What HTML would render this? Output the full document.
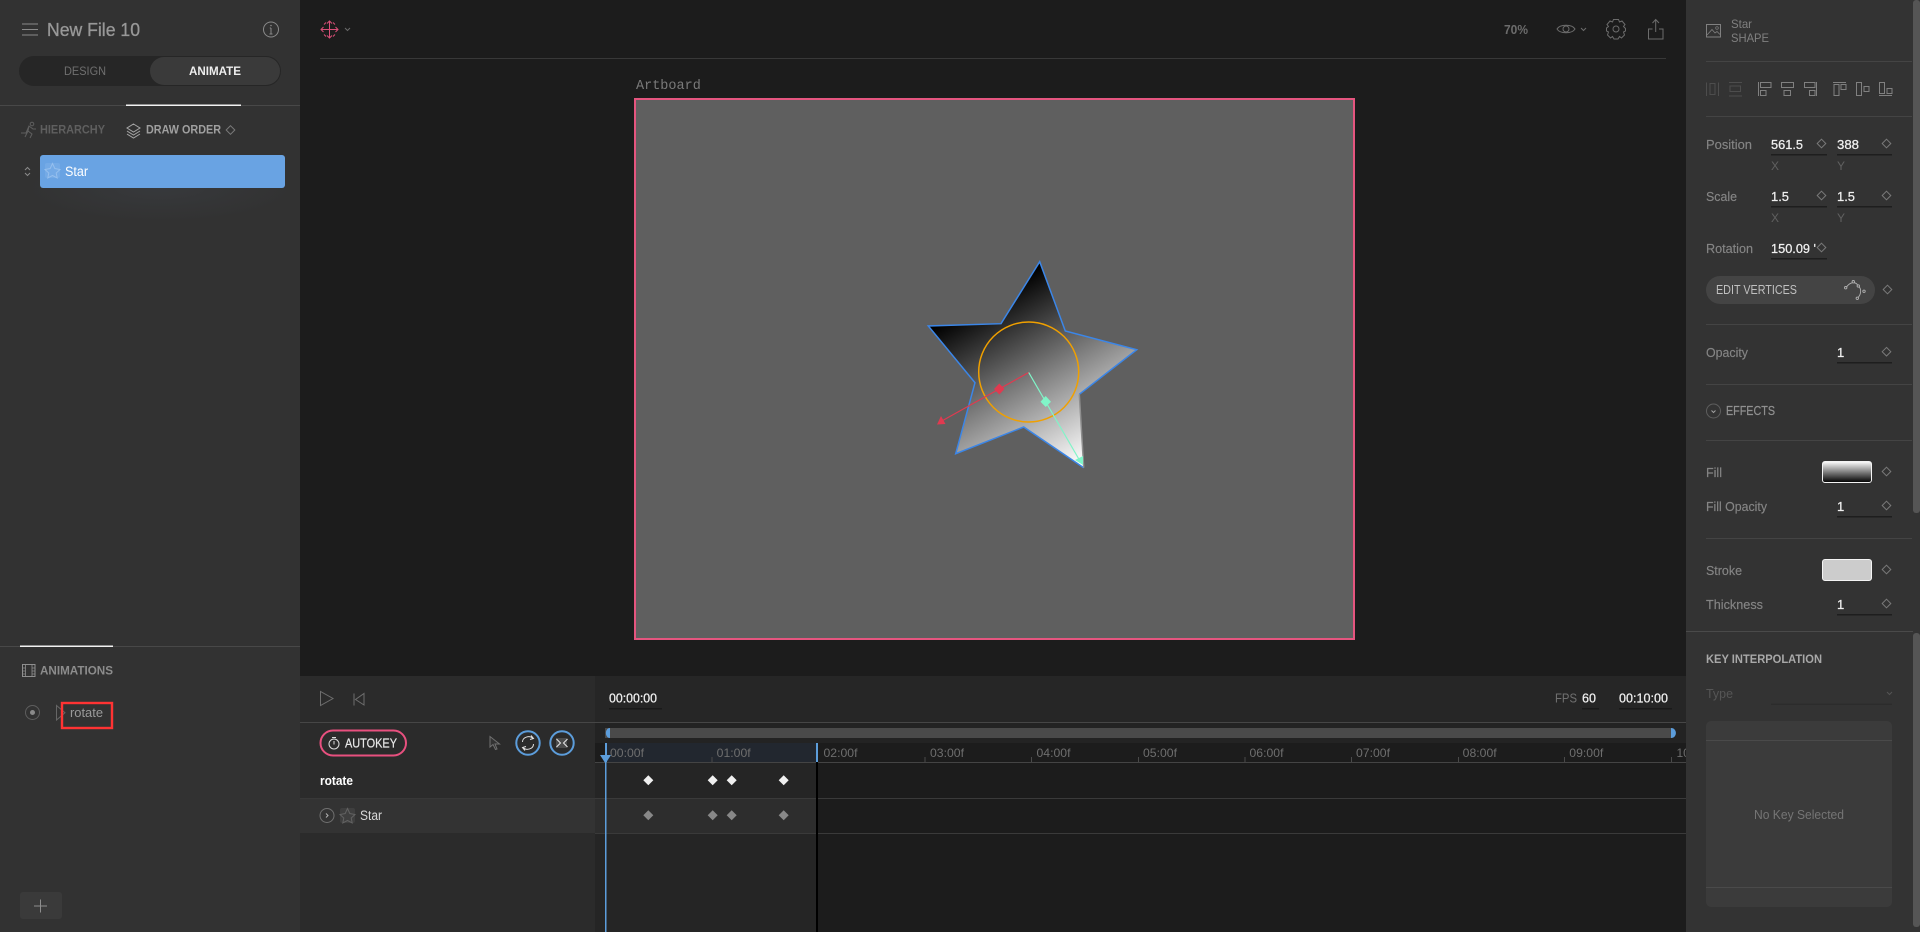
<!DOCTYPE html>
<html><head><meta charset="utf-8"><title>New File 10</title>
<style>
html,body{margin:0;padding:0;background:#1c1c1c;overflow:hidden;width:1920px;height:932px}
svg{display:block;position:absolute;left:0;top:0}
text{font-family:"Liberation Sans",sans-serif;font-size:13px;fill:#8e8e8e}
.b{font-weight:bold}
.w{fill:#f0f0f0}
.m{font-family:"Liberation Mono",monospace}
.s{fill:#5f5f5f}
.l{fill:#8a8a8a}
.r{fill:#6e6e6e;font-size:12px}
.v{font-size:13px;fill:#f0f0f0;stroke:#f0f0f0;stroke-width:.25px}
.p{font-size:13px;fill:#858585;stroke:#858585;stroke-width:.15px}
</style></head><body>
<svg width="1920" height="932" viewBox="0 0 1920 932" xmlns="http://www.w3.org/2000/svg">
<defs>
<g id="d"><path d="M0-4.300L4.300 0 0 4.300-4.300 0Z" fill="none" stroke="#7a7a7a" stroke-width="1"/></g>
<g id="k"><path d="M0-5L5 0 0 5-5 0Z"/></g>
<linearGradient id="sg" gradientUnits="userSpaceOnUse" x1="986" y1="298" x2="1082" y2="464">
<stop offset="0" stop-color="#000"/><stop offset="1" stop-color="#fff"/></linearGradient>
<linearGradient id="fg" x1="0" y1="0" x2="0" y2="1"><stop offset="0" stop-color="#fff"/><stop offset="1" stop-color="#000"/></linearGradient>
<radialGradient id="gl" cx=".5" cy=".5" r=".5"><stop offset="0" stop-color="#37393c"/><stop offset="1" stop-color="#323232"/></radialGradient>
</defs>

<!-- backgrounds -->
<rect width="1920" height="932" fill="#1c1c1c"/>
<rect x="0" y="0" width="300" height="932" fill="#323232"/>
<rect x="300" y="676" width="295" height="256" fill="#2b2b2b"/>
<rect x="595" y="676" width="1091" height="256" fill="#1c1c1c"/>
<rect x="595" y="676" width="1091" height="46" fill="#262626"/>
<rect x="595" y="722" width="1091" height="21" fill="#232323"/>
<rect x="595" y="762" width="222" height="170" fill="#252525"/>
<rect x="300" y="798" width="295" height="35" fill="#333"/>
<rect x="595" y="798" width="222" height="35" fill="#2d2d2d"/>
<rect x="1686" y="0" width="234" height="932" fill="#333"/>

<!-- left panel header -->
<g stroke="#8a8a8a" stroke-width="1"><path d="M22 24H38M22 29.500H38M22 35H38"/></g>
<text x="47" y="36" style="font-size:18px;fill:#989898;stroke:#989898;stroke-width:.3px" textLength="93" lengthAdjust="spacingAndGlyphs">New File 10</text>
<circle cx="271" cy="29.500" r="7.500" fill="none" stroke="#8a8a8a"/>
<path d="M271 28V34M269.500 34H272.500M269.800 28H271" stroke="#8a8a8a" fill="none"/><circle cx="271" cy="25.500" r=".8" fill="#8a8a8a"/>
<rect x="19" y="56" width="262" height="30" rx="15" fill="#262626"/>
<rect x="150" y="57" width="130" height="28" rx="14" fill="#3a3a3a"/>
<text x="64" y="75" style="font-size:12px;fill:#6f6f6f" textLength="42" lengthAdjust="spacingAndGlyphs">DESIGN</text>
<text x="189" y="75" class="b" style="font-size:12px;fill:#eee" textLength="52" lengthAdjust="spacingAndGlyphs">ANIMATE</text>
<rect x="0" y="105" width="300" height="1" fill="#484848"/>
<rect x="126" y="104.500" width="115" height="1.500" fill="#f2f2f2"/>

<!-- hierarchy tabs -->
<g fill="none" stroke="#5f5f5f" stroke-width="1"><circle cx="32" cy="124" r="1.800"/><path d="M21 133L26 133 29 126 33 129 36 129M29 126L28 131 32 134 30 138M28 131L25 137"/></g>
<text x="40" y="133.500" class="b s" style="font-size:12px" textLength="65" lengthAdjust="spacingAndGlyphs">HIERARCHY</text>
<g fill="none" stroke="#a5a5a5" stroke-width="1"><path d="M133.500 124L140 128 133.500 132 127 128ZM127 131L133.500 135 140 131M127 134L133.500 138 140 134"/></g>
<text x="146" y="133.500" class="b" style="font-size:12px;fill:#a0a0a0" textLength="75" lengthAdjust="spacingAndGlyphs">DRAW ORDER</text>
<use href="#d" x="230.500" y="130"/>
<ellipse cx="160" cy="188" rx="135" ry="34" fill="url(#gl)"/>
<path d="M25 170L27.500 167.500 30 170M25 173L27.500 175.500 30 173" fill="none" stroke="#8a8a8a"/>
<rect x="40" y="155" width="245" height="33" rx="3" fill="#69a3e3"/>
<rect x="45" y="163" width="15" height="15" rx="2" fill="#74aae6"/>
<path d="M52.500 163.500L54.800 168.500 60 169.500 56.200 173 57.200 178 52.500 175.500 47.800 178 48.800 173 45 169.500 50.200 168.500Z" fill="none" stroke="#95bfee"/>
<text x="65" y="176" class="w" style="font-size:13.500px;fill:#fff" textLength="23" lengthAdjust="spacingAndGlyphs">Star</text>

<!-- animations -->
<rect x="0" y="646" width="300" height="1" fill="#484848"/>
<rect x="20" y="645.500" width="93" height="1.500" fill="#f2f2f2"/>
<rect x="22.500" y="664.500" width="12.500" height="12" fill="none" stroke="#8f8f8f"/>
<path d="M25.500 665V676M32 665V676M22.500 668H25.500M22.500 671H25.500M22.500 674H25.500M32 668H35M32 671H35M32 674H35" stroke="#8f8f8f" stroke-width=".8"/>
<text x="40" y="674.500" class="b" style="font-size:12px;fill:#8c8c8c" textLength="73" lengthAdjust="spacingAndGlyphs">ANIMATIONS</text>
<circle cx="32.500" cy="712.500" r="7" fill="none" stroke="#5e5e5e"/><circle cx="32.500" cy="712.500" r="2.500" fill="#8a8a8a"/>
<path d="M56.500 705.500V720L65 712.800Z" fill="none" stroke="#666"/>
<rect x="62" y="703" width="50" height="25" fill="none" stroke="#ff3333" stroke-width="2.400"/>
<text x="70" y="717" style="font-size:13px;fill:#9a9a9a" textLength="33" lengthAdjust="spacingAndGlyphs">rotate</text>
<rect x="20" y="892" width="42" height="27" rx="3" fill="#3a3a3a"/>
<path d="M40.500 899.500V912.500M34 906H47" stroke="#8e8e8e" fill="none"/>

<!-- top bar -->
<g fill="none" stroke="#d94f78" stroke-width="1"><path d="M329.500 21V38M321 29.500H338M327 23.500L329.500 21 332 23.500M327 35.500L329.500 38 332 35.500M323.500 27L321 29.500 323.500 32M335.500 27L338 29.500 335.500 32"/><path d="M324 24.500L326 22.500M335 24.500L333 22.500M324 34.500L326 36.500M335 34.500L333 36.500" stroke-width="1"/></g>
<path d="M345 28L347.500 30.500 350 28" fill="none" stroke="#6a6a6a"/>
<rect x="320" y="58" width="1346" height="1" fill="#383838"/>
<text x="1504" y="34" class="b" style="font-size:13px;fill:#6c6c6c" textLength="24" lengthAdjust="spacingAndGlyphs">70%</text>
<g fill="none" stroke="#6c6c6c" stroke-width="1">
<path d="M1557 29C1560 24 1572 24 1575 29 1572 34 1560 34 1557 29Z"/><circle cx="1566" cy="29" r="3"/>
<path d="M1581 28L1583.500 30.500 1586 28"/>
<circle cx="1616" cy="29" r="3"/>
<path d="M1613.500 19.500L1618.500 19.500 1619.500 22 1622 21 1625 24.500 1623.500 26.500 1625.500 28.500 1625.500 31 1623.500 32 1624.500 35 1621.500 38 1619.500 36.500 1618 39 1614 39 1612.500 36.500 1610.500 38 1607.500 35 1608.500 32 1606.500 31 1606.500 28 1608.500 26.500 1607 24.500 1610 21 1612.500 22Z"/>
<path d="M1652.500 29H1648.500V39H1663V29H1659M1655.700 32V19.500M1652.500 23L1655.700 19.500 1659 23"/>
</g>

<!-- artboard -->
<text x="636" y="89" class="m" style="font-size:13.500px;fill:#7a7a7a">Artboard</text>
<rect x="635" y="99" width="719" height="540" fill="#5f5f5f" stroke="#e5557f" stroke-width="2"/>
<path d="M1039.700 261.700L1065.300 331 1136.700 349.700 1079.300 394.300 1083.700 467.700 1023.700 427 955.700 453.700 975 382.700 928.300 326 1001 323.700Z" fill="url(#sg)"/>
<path d="M1079.300 394.300L1136.700 349.700 1065.300 331 1039.700 261.700 1001 323.700 928.300 326 975 382.700 955.700 453.700 1023.700 427 1083.700 467.700" fill="none" stroke="#3b86e8" stroke-width="1.500"/>
<path d="M1079.300 394.300L1083.700 467.700" stroke="#8f8f8f" stroke-width="1.500" fill="none"/>
<circle cx="1028.700" cy="372" r="50" fill="none" stroke="#f0a000" stroke-width="1.500"/>
<path d="M1028.700 372.500L940 422" stroke="#e03a50" stroke-width="1.200" fill="none"/>
<path d="M937 424.500L941 416 945.500 424Z" fill="#e03a50"/>
<path d="M999.300 383.500L1004.500 389 999.300 394.500 994 389Z" fill="#e03a50"/>
<path d="M1028.700 372.500L1080 461" stroke="#80f5c8" stroke-width="1.200" fill="none"/>
<path d="M1045.700 396L1051 401.700 1045.700 407 1040.500 401.700Z" fill="#80f5c8"/>
<path d="M1083 465L1075 460 1083 456Z" fill="#80f5c8"/>

<!-- timeline left -->
<rect x="300" y="722" width="1386" height="1" fill="#464646"/>
<path d="M320.500 691.500V705.500L333 698.500Z" fill="none" stroke="#6e6e6e"/>
<path d="M354 693.500V705.500M364 693.500V705L355.500 699.500Z" fill="none" stroke="#6e6e6e"/>
<rect x="320.500" y="730.500" width="85.500" height="25" rx="12.500" fill="none" stroke="#e8507f" stroke-width="2"/>
<circle cx="334" cy="744" r="5" fill="none" stroke="#dcdcdc"/><path d="M334 741V744.500M332 737.500H336" stroke="#dcdcdc" fill="none"/>
<text x="345" y="747.500" style="font-size:12.500px;fill:#e8e8e8;stroke:#e8e8e8;stroke-width:.2px" textLength="52" lengthAdjust="spacingAndGlyphs">AUTOKEY</text>
<path d="M490 736.500V747L493 744.500 495.500 749.500 497 749 495 744 499.500 744Z" fill="#333" stroke="#707070"/>
<circle cx="528" cy="743" r="11.700" fill="none" stroke="#5c9ddb" stroke-width="2"/>
<circle cx="562" cy="743" r="11.700" fill="none" stroke="#5c9ddb" stroke-width="2"/>
<g fill="none" stroke="#e0e0e0" stroke-width="1"><path d="M522.500 742C522.500 737 529.500 735 533 738.500M531 735.500L533.500 738.500 530 739.500M533.500 744C533.500 749 526.500 751 523 747.500M525 750.500L522.500 747.500 526 746.500"/></g>
<rect x="556" y="738" width="11" height="10" fill="#4c4c4c"/>
<path d="M556.500 739L560.500 743 556.500 747M567.500 739L563.500 743 567.500 747" fill="none" stroke="#e8e8e8"/>
<text x="320" y="785" class="b w" style="font-size:13px;fill:#fff" textLength="33" lengthAdjust="spacingAndGlyphs">rotate</text>
<rect x="300" y="798" width="295" height=".8" fill="#393939"/>
<circle cx="327" cy="815.500" r="7" fill="none" stroke="#707070"/><path d="M326 813.500L328 815.500 326 817.500" fill="none" stroke="#b0b0b0"/>
<rect x="340" y="808" width="15" height="15" rx="2" fill="#3f3f3f"/>
<path d="M347.500 808.500L349.800 813.500 355 814.500 351.200 818 352.200 823 347.500 820.500 342.800 823 343.800 818 340 814.500 345.200 813.500Z" fill="none" stroke="#626262"/>
<text x="360" y="820" style="font-size:13.500px;fill:#d8d8d8" textLength="22" lengthAdjust="spacingAndGlyphs">Star</text>

<!-- timeline right -->
<text x="609" y="702.500" class="v" textLength="48" lengthAdjust="spacingAndGlyphs">00:00:00</text>
<rect x="609" y="708" width="53" height="1.500" fill="#1a1a1a"/>
<text x="1555" y="702.500" style="font-size:13px;fill:#707070" textLength="22" lengthAdjust="spacingAndGlyphs">FPS</text>
<text x="1582" y="702.500" class="v" textLength="14" lengthAdjust="spacingAndGlyphs">60</text>
<rect x="1582" y="708" width="17" height="1.500" fill="#1a1a1a"/>
<text x="1619" y="702.500" class="v" textLength="49" lengthAdjust="spacingAndGlyphs">00:10:00</text>
<rect x="1619" y="708" width="53" height="1.500" fill="#1a1a1a"/>
<rect x="605" y="728" width="1067" height="10" fill="#4a4a4a"/>
<path d="M610 728V738C604.500 738 604.500 728 610 728Z" fill="#5c9ddb"/>
<path d="M1671 728V738C1677.500 738 1677.500 728 1671 728Z" fill="#5c9ddb"/>
<rect x="595" y="743" width="1091" height="19" fill="#1c1c1c"/>
<rect x="605" y="743" width="212" height="19" fill="#22272f"/>
<rect x="595" y="762" width="1091" height="1" fill="#444"/>
<rect x="605" y="798" width="1081" height="1" fill="#3a3a3a"/><rect x="595" y="798" width="10" height="1" fill="#3a3a3a"/>
<rect x="595" y="833" width="1091" height="1" fill="#3a3a3a"/>
<rect x="816" y="762" width="2" height="170" fill="#000"/>
<g fill="#4a4a4a"><rect x="711.500" y="757" width="1" height="5"/><rect x="924.500" y="757" width="1" height="5"/><rect x="1031" y="757" width="1" height="5"/><rect x="1138" y="757" width="1" height="5"/><rect x="1244.500" y="757" width="1" height="5"/><rect x="1351" y="757" width="1" height="5"/><rect x="1458" y="757" width="1" height="5"/><rect x="1564" y="757" width="1" height="5"/><rect x="1671" y="757" width="1" height="5"/></g>
<g>
<text x="610" y="757" class="r" textLength="34" lengthAdjust="spacingAndGlyphs">00:00f</text>
<text x="716.700" y="757" class="r" textLength="34" lengthAdjust="spacingAndGlyphs">01:00f</text>
<text x="823.500" y="757" class="r" textLength="34" lengthAdjust="spacingAndGlyphs">02:00f</text>
<text x="930" y="757" class="r" textLength="34" lengthAdjust="spacingAndGlyphs">03:00f</text>
<text x="1036.500" y="757" class="r" textLength="34" lengthAdjust="spacingAndGlyphs">04:00f</text>
<text x="1143" y="757" class="r" textLength="34" lengthAdjust="spacingAndGlyphs">05:00f</text>
<text x="1249.500" y="757" class="r" textLength="34" lengthAdjust="spacingAndGlyphs">06:00f</text>
<text x="1356" y="757" class="r" textLength="34" lengthAdjust="spacingAndGlyphs">07:00f</text>
<text x="1462.700" y="757" class="r" textLength="34" lengthAdjust="spacingAndGlyphs">08:00f</text>
<text x="1569.300" y="757" class="r" textLength="34" lengthAdjust="spacingAndGlyphs">09:00f</text>
<text x="1676.500" y="757" class="r">10</text>
</g>
<rect x="1686" y="740" width="234" height="30" fill="#333"/>
<rect x="605" y="743" width="2" height="19" fill="#5c9ddb"/>
<rect x="816" y="743" width="2" height="19" fill="#5c9ddb"/>
<rect x="605" y="762" width="1.500" height="170" fill="#5c9ddb"/>
<path d="M600 755H611L605.500 763.500Z" fill="#5c9ddb"/>
<g fill="#f0f0f0"><use href="#k" x="648.300" y="780.300"/><use href="#k" x="712.700" y="780.300"/><use href="#k" x="731.700" y="780.300"/><use href="#k" x="783.700" y="780.300"/></g>
<g fill="#888"><use href="#k" x="648.300" y="815.300"/><use href="#k" x="712.700" y="815.300"/><use href="#k" x="731.700" y="815.300"/><use href="#k" x="783.700" y="815.300"/></g>

<!-- right panel -->
<rect x="1913" y="0" width="7" height="513" rx="3" fill="#555"/>
<rect x="1913" y="633" width="7" height="294" rx="3" fill="#555"/>
<rect x="1706.500" y="24.500" width="14" height="12.500" fill="none" stroke="#808080"/>
<path d="M1707 35L1712 29.500 1715 33 1717 31.500 1720 34.500" fill="none" stroke="#808080" stroke-width=".8"/><circle cx="1717" cy="28" r="1.300" fill="none" stroke="#808080" stroke-width=".7"/>
<text x="1731" y="28" style="font-size:12px;fill:#808080" textLength="21" lengthAdjust="spacingAndGlyphs">Star</text>
<text x="1731" y="42" style="font-size:12px;fill:#808080" textLength="38" lengthAdjust="spacingAndGlyphs">SHAPE</text>
<g fill="#444"><rect x="1706" y="61" width="206" height="1"/><rect x="1706" y="116" width="206" height="1"/><rect x="1706" y="324" width="206" height="1"/><rect x="1706" y="384" width="206" height="1"/><rect x="1706" y="440" width="206" height="1"/><rect x="1706" y="538" width="206" height="1"/></g>
<rect x="1686" y="631" width="227" height="1" fill="#4a4a4a"/>
<!-- align icons -->
<g fill="none" stroke="#4d4d4d" stroke-width="1"><path d="M1706.500 82.500V96M1718.500 82.500V96"/><rect x="1710" y="83.500" width="5" height="11"/><path d="M1729 82.500H1742M1729 96H1742"/><rect x="1730" y="86" width="10.500" height="5.500"/></g>
<g fill="none" stroke="#808080" stroke-width="1"><path d="M1758.500 82V96"/><rect x="1760.500" y="82.500" width="10.500" height="5"/><rect x="1760.500" y="90.500" width="5.500" height="5"/>
<rect x="1781.500" y="82.500" width="12" height="5"/><rect x="1784" y="90.500" width="6.500" height="5"/>
<path d="M1816.500 82V96"/><rect x="1804.500" y="82.500" width="10.500" height="5"/><rect x="1809.500" y="90.500" width="5.500" height="5"/>
<path d="M1833 82.500H1846"/><rect x="1834" y="84.500" width="5" height="11"/><rect x="1841" y="84.500" width="5" height="5"/>
<rect x="1856.500" y="82.500" width="5" height="13"/><rect x="1864" y="86.500" width="5" height="5"/>
<path d="M1879 95.500H1892"/><rect x="1879.500" y="82.500" width="5" height="11"/><rect x="1887" y="88.500" width="5" height="5"/></g>
<!-- properties -->
<text x="1706" y="149" class="p" textLength="46" lengthAdjust="spacingAndGlyphs">Position</text>
<text x="1771" y="149" class="v" textLength="32" lengthAdjust="spacingAndGlyphs">561.5</text><use href="#d" x="1821.500" y="143.500"/><rect x="1771" y="154" width="56" height="1.500" fill="#1e1e1e"/>
<text x="1837" y="149" class="v" textLength="22" lengthAdjust="spacingAndGlyphs">388</text><use href="#d" x="1886.500" y="143.500"/><rect x="1837" y="154" width="55" height="1.500" fill="#1e1e1e"/>
<text x="1771" y="170" style="font-size:12px;fill:#606060">X</text><text x="1837" y="170" style="font-size:12px;fill:#606060">Y</text>
<text x="1706" y="201" class="p" textLength="31" lengthAdjust="spacingAndGlyphs">Scale</text>
<text x="1771" y="201" class="v" textLength="18" lengthAdjust="spacingAndGlyphs">1.5</text><use href="#d" x="1821.500" y="195.500"/><rect x="1771" y="206" width="56" height="1.500" fill="#1e1e1e"/>
<text x="1837" y="201" class="v" textLength="18" lengthAdjust="spacingAndGlyphs">1.5</text><use href="#d" x="1886.500" y="195.500"/><rect x="1837" y="206" width="55" height="1.500" fill="#1e1e1e"/>
<text x="1771" y="222" style="font-size:12px;fill:#606060">X</text><text x="1837" y="222" style="font-size:12px;fill:#606060">Y</text>
<text x="1706" y="253" class="p" textLength="47" lengthAdjust="spacingAndGlyphs">Rotation</text>
<text x="1771" y="253" class="v" textLength="45" lengthAdjust="spacingAndGlyphs">150.09 '</text><use href="#d" x="1821.500" y="247.500"/><rect x="1771" y="258" width="56" height="1.500" fill="#1e1e1e"/>
<rect x="1706" y="276" width="169" height="28" rx="14" fill="#444"/>
<text x="1716" y="294" style="font-size:12.500px;fill:#c0c0c0" textLength="81" lengthAdjust="spacingAndGlyphs">EDIT VERTICES</text>
<g fill="#444" stroke="#b0b0b0" stroke-width=".9"><path d="M1846 287.700C1849 283 1855 280 1858.300 286 1862 289 1861 295 1857.500 298" fill="none"/><circle cx="1845.700" cy="287.700" r="1.200"/><circle cx="1853.300" cy="281.700" r="1.200"/><circle cx="1858.300" cy="286" r="1.200"/><circle cx="1864" cy="291.300" r="1.200"/><circle cx="1857.300" cy="298.300" r="1.200"/></g>
<use href="#d" x="1887.500" y="289.500"/>
<text x="1706" y="357" class="p" textLength="42" lengthAdjust="spacingAndGlyphs">Opacity</text>
<text x="1837" y="357" class="v">1</text><use href="#d" x="1886.500" y="351.700"/><rect x="1837" y="362" width="55" height="1.500" fill="#1e1e1e"/>
<circle cx="1713.500" cy="411" r="7" fill="none" stroke="#5e5e5e"/><path d="M1711.500 410.500L1713.500 412.500 1715.500 410.500" fill="none" stroke="#a0a0a0"/>
<text x="1726" y="415" style="font-size:12.500px;fill:#919191;stroke:#919191;stroke-width:.2px" textLength="49" lengthAdjust="spacingAndGlyphs">EFFECTS</text>
<text x="1706" y="477" class="p" textLength="16" lengthAdjust="spacingAndGlyphs">Fill</text>
<rect x="1822.500" y="461.500" width="49" height="21" rx="2.500" fill="url(#fg)" stroke="#f4f4f4"/>
<use href="#d" x="1886.500" y="471.500"/>
<text x="1706" y="511" class="p" textLength="61" lengthAdjust="spacingAndGlyphs">Fill Opacity</text>
<text x="1837" y="511" class="v">1</text><use href="#d" x="1886.500" y="505.500"/><rect x="1837" y="516" width="55" height="1.500" fill="#1e1e1e"/>
<text x="1706" y="575" class="p" textLength="36" lengthAdjust="spacingAndGlyphs">Stroke</text>
<rect x="1822.500" y="559.500" width="49" height="21" rx="2.500" fill="#ccc" stroke="#f4f4f4"/>
<use href="#d" x="1886.500" y="569.500"/>
<text x="1706" y="609" class="p" textLength="57" lengthAdjust="spacingAndGlyphs">Thickness</text>
<text x="1837" y="609" class="v">1</text><use href="#d" x="1886.500" y="603.500"/><rect x="1837" y="614" width="55" height="1.500" fill="#1e1e1e"/>
<text x="1706" y="663" class="b" style="font-size:12px;fill:#a8a8a8" textLength="116" lengthAdjust="spacingAndGlyphs">KEY INTERPOLATION</text>
<text x="1706" y="698" style="font-size:13px;fill:#565656" textLength="27" lengthAdjust="spacingAndGlyphs">Type</text>
<path d="M1887 692L1889.500 694.500 1892 692" fill="none" stroke="#555"/>
<rect x="1771" y="703.500" width="121" height="1.500" fill="#2c2c2c"/>
<rect x="1706" y="721" width="186" height="186" rx="5" fill="#3b3b3b"/>
<rect x="1706" y="740" width="186" height="1" fill="#4a4a4a"/><rect x="1706" y="887" width="186" height="1" fill="#4a4a4a"/>
<text x="1754" y="819" style="font-size:13px;fill:#757575" textLength="90" lengthAdjust="spacingAndGlyphs">No Key Selected</text>
</svg>
</body></html>
